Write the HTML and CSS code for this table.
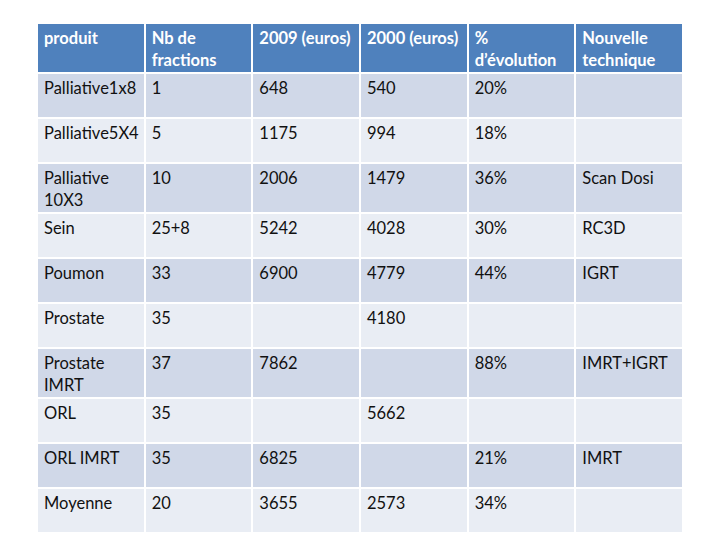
FILE: index.html
```html
<!DOCTYPE html>
<html>
<head>
<meta charset="utf-8">
<link rel="stylesheet" href="styles.css">
</head>
<body>
<div class="page">
<table class="data">
  <thead>
    <tr><th>produit</th><th>Nb de fractions</th><th>2009 (euros)</th><th>2000 (euros)</th><th>% d’évolution</th><th>Nouvelle technique</th></tr>
  </thead>
  <tbody>
    <tr><td>Palliative1x8</td><td>1</td><td>648</td><td>540</td><td>20%</td><td></td></tr>
    <tr><td>Palliative5X4</td><td>5</td><td>1175</td><td>994</td><td>18%</td><td></td></tr>
    <tr><td>Palliative 10X3</td><td>10</td><td>2006</td><td>1479</td><td>36%</td><td>Scan Dosi</td></tr>
    <tr><td>Sein</td><td>25+8</td><td>5242</td><td>4028</td><td>30%</td><td>RC3D</td></tr>
    <tr><td>Poumon</td><td>33</td><td>6900</td><td>4779</td><td>44%</td><td>IGRT</td></tr>
    <tr><td>Prostate</td><td>35</td><td></td><td>4180</td><td></td><td></td></tr>
    <tr><td>Prostate IMRT</td><td>37</td><td>7862</td><td></td><td>88%</td><td>IMRT+IGRT</td></tr>
    <tr><td>ORL</td><td>35</td><td></td><td>5662</td><td></td><td></td></tr>
    <tr><td>ORL IMRT</td><td>35</td><td>6825</td><td></td><td>21%</td><td>IMRT</td></tr>
    <tr><td>Moyenne</td><td>20</td><td>3655</td><td>2573</td><td>34%</td><td></td></tr>
  </tbody>
</table>
</div>
</body>
</html>
```
FILE: styles.css
```css
html, body {
  margin: 0;
  padding: 0;
  background: #ffffff;
}
.page {
  padding: 22px 0 0 36px;
}
.data {
  border-collapse: collapse;
  table-layout: fixed;
  width: 648px;
  font-family: Lato, "Open Sans", sans-serif;
  font-size: 16.5px;
  line-height: 22px;
  color: #111111;
}
.data th, .data td {
  border: 2px solid #ffffff;
  padding: 3px 6px 1px 6px;
  vertical-align: top;
  text-align: left;
}
.data th {
  background: #4f81bd;
  color: #ffffff;
  font-weight: bold;
  height: 42px;
}
.data td {
  height: 39px;
}
.data tbody tr:nth-child(odd) td {
  background: #d0d8e8;
}
.data tbody tr:nth-child(even) td {
  background: #e9edf4;
}
```
